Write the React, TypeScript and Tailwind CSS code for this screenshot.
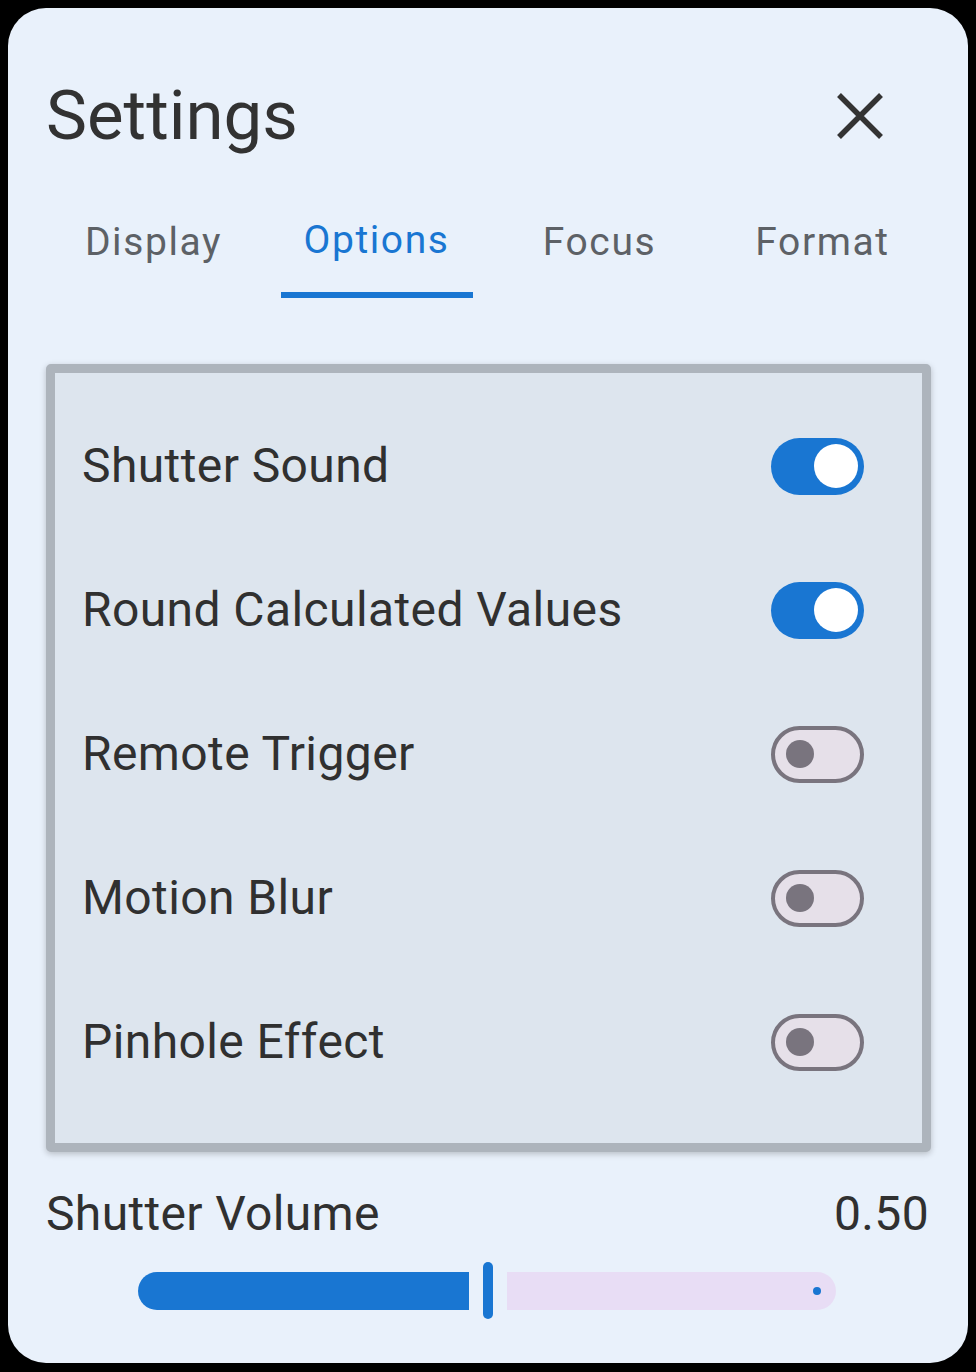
import React from "react";

type Row = { label: string; on: boolean };

const rows: Row[] = [
  { label: "Shutter Sound", on: true },
  { label: "Round Calculated Values", on: true },
  { label: "Remote Trigger", on: false },
  { label: "Motion Blur", on: false },
  { label: "Pinhole Effect", on: false },
];

const tabs = ["Display", "Options", "Focus", "Format"];

function Switch({ on }: { on: boolean }) {
  if (on) {
    return (
      <div className="w-[93px] h-[57px] rounded-full bg-[#1976d2] flex items-center justify-end pr-[6px]">
        <div className="w-[44px] h-[44px] rounded-full bg-white" />
      </div>
    );
  }
  return (
    <div className="w-[93px] h-[57px] rounded-full bg-[#e6e0e9] border-[4px] border-[#79747e] flex items-center pl-[11px]">
      <div className="w-[28px] h-[28px] rounded-full bg-[#79747e]" />
    </div>
  );
}

export default function App() {
  return (
    <div
      className="w-[976px] h-[1372px] bg-black p-2"
      style={{ fontFamily: 'Roboto, "Noto Sans", sans-serif' }}
    >
      <div className="h-[1355px] rounded-[38px] bg-[#e9f1fb] px-[38px] pt-[68px] flex flex-col">
        <div className="flex items-center justify-between h-[80px]">
          <span className="text-[69px] leading-[80px] text-[#323232]">Settings</span>
          <svg width="48" height="48" viewBox="0 0 48 48" className="mr-[46px]">
            <path d="M3 3 L45 45 M45 3 L3 45" stroke="#333333" strokeWidth="5.5" fill="none" />
          </svg>
        </div>

        <div className="grid grid-cols-4 w-[892px] -ml-[4px] mt-[62px]">
          {tabs.map((t) => {
            const active = t === "Options";
            return (
              <div key={t} className="flex flex-col items-center">
                <span
                  className={
                    "text-[39px] leading-[48px] tracking-[1.6px] " +
                    (active ? "text-[#1976d2] -translate-y-[2px]" : "text-[#5d6166]")
                  }
                >
                  {t}
                </span>
                <div className="h-[26px]" />
                <div className={"h-[6px] w-[192px] " + (active ? "bg-[#1976d2]" : "bg-transparent")} />
              </div>
            );
          })}
        </div>

        <div className="mt-[66px] w-[885px] border-[9px] border-[#adb4bc] rounded-[5px] bg-[#dde5ee] pt-[21px] pb-[29px] shadow-[0_2px_6px_rgba(0,0,0,0.22)]">
          {rows.map((r) => (
            <div key={r.label} className="h-[144px] flex items-center justify-between pl-[27px] pr-[58px]">
              <span className="text-[48px] leading-[56px] tracking-[0.4px] text-[#303030]">{r.label}</span>
              <Switch on={r.on} />
            </div>
          ))}
        </div>

        <div className="mt-[34px] flex items-baseline justify-between">
          <span className="text-[48px] leading-[56px] tracking-[0.35px] text-[#303030]">Shutter Volume</span>
          <span className="text-[48px] leading-[56px] tracking-[0.35px] text-[#303030] mr-[1px]">0.50</span>
        </div>

        <div className="mt-[20px] ml-[92px] w-[698px] h-[57px] flex items-center">
          <div className="w-[331px] h-[38px] bg-[#1976d2] rounded-l-full rounded-r-[4px]" />
          <div className="ml-[14px] w-[10px] h-[57px] rounded-full bg-[#1976d2]" />
          <div className="ml-[14px] w-[329px] h-[38px] bg-[#e8ddf5] rounded-l-[4px] rounded-r-full flex items-center justify-end pr-[15px]">
            <div className="w-[8px] h-[8px] rounded-full bg-[#1976d2]" />
          </div>
        </div>
      </div>
    </div>
  );
}
